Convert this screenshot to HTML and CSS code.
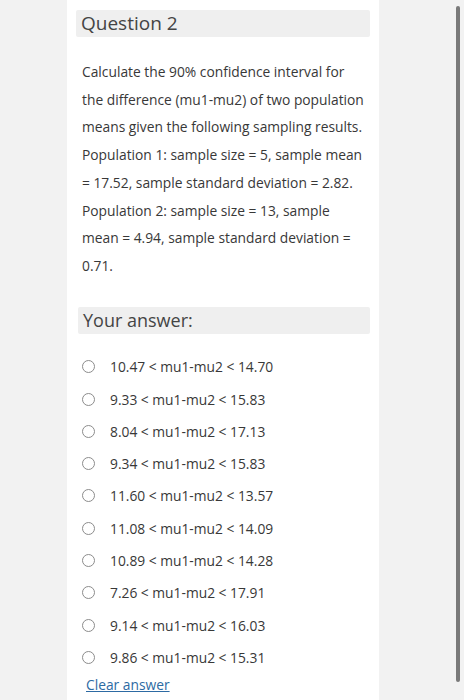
FILE: index.html
```
<!DOCTYPE html>
<html>
<head>
<meta charset="utf-8">
<link rel="stylesheet" href="styles.css">
</head>
<body>
<div class="panel">
  <div class="qhead">Question 2</div>
  <div class="qtext">Calculate the 90% confidence interval for<br>the difference (mu1-mu2) of two population<br>means given the following sampling results.<br>Population 1: sample size = 5, sample mean<br>= 17.52, sample standard deviation = 2.82.<br>Population 2: sample size = 13, sample<br>mean = 4.94, sample standard deviation =<br>0.71.</div>
  <div class="ahead">Your answer:</div>
  <div class="options">
    <div class="opt"><span class="radio"></span><span>10.47 &lt; mu1-mu2 &lt; 14.70</span></div>
    <div class="opt"><span class="radio"></span><span>9.33 &lt; mu1-mu2 &lt; 15.83</span></div>
    <div class="opt"><span class="radio"></span><span>8.04 &lt; mu1-mu2 &lt; 17.13</span></div>
    <div class="opt"><span class="radio"></span><span>9.34 &lt; mu1-mu2 &lt; 15.83</span></div>
    <div class="opt"><span class="radio"></span><span>11.60 &lt; mu1-mu2 &lt; 13.57</span></div>
    <div class="opt"><span class="radio"></span><span>11.08 &lt; mu1-mu2 &lt; 14.09</span></div>
    <div class="opt"><span class="radio"></span><span>10.89 &lt; mu1-mu2 &lt; 14.28</span></div>
    <div class="opt"><span class="radio"></span><span>7.26 &lt; mu1-mu2 &lt; 17.91</span></div>
    <div class="opt"><span class="radio"></span><span>9.14 &lt; mu1-mu2 &lt; 16.03</span></div>
    <div class="opt"><span class="radio"></span><span>9.86 &lt; mu1-mu2 &lt; 15.31</span></div>
  </div>
  <a class="clear" href="#">Clear answer</a>
</div>
<div class="scrollbar"></div>
</body>
</html>
```
FILE: styles.css
```
html, body {
  margin: 0;
  padding: 0;
  background: #f2f2f2;
  height: 100%;
  overflow: hidden;
}
body {
  font-family: "Open Sans", "Noto Sans", sans-serif;
  color: #383838;
}
.panel {
  margin-left: 67px;
  width: 312px;
  background: #fff;
  padding-top: 10px;
  min-height: 700px;
  box-sizing: border-box;
}
.qhead {
  margin: 0 9px 0 9px;
  height: 27px;
  background: #efefef;
  border-radius: 2px;
  font-size: 19px;
  line-height: 27px;
  padding-left: 5px;
  color: #444;
}
.qtext {
  margin-top: 21px;
  padding-left: 15px;
  font-size: 13.8px;
  line-height: 27.7px;
  white-space: nowrap;
}
.ahead {
  margin: 27px 9px 0 11px;
  height: 27px;
  background: #efefef;
  border-radius: 2px;
  font-size: 18px;
  line-height: 27px;
  padding-left: 5px;
  color: #444;
}
.options {
  margin-top: 17px;
  padding-left: 15px;
}
.opt {
  height: 32.3px;
  display: flex;
  align-items: center;
  font-size: 13.8px;
}
.radio {
  width: 11px;
  height: 11px;
  border: 1.3px solid #8c8c8c;
  border-radius: 50%;
  margin-right: 15px;
  flex: none;
}
.clear {
  display: block;
  margin-left: 19px;
  margin-top: 1px;
  font-size: 13.8px;
  color: #2d6aa3;
}
.scrollbar {
  position: absolute;
  left: 456px;
  top: 6px;
  width: 4px;
  height: 676px;
  background: #7a7a7a;
  border-radius: 2px;
}
```
